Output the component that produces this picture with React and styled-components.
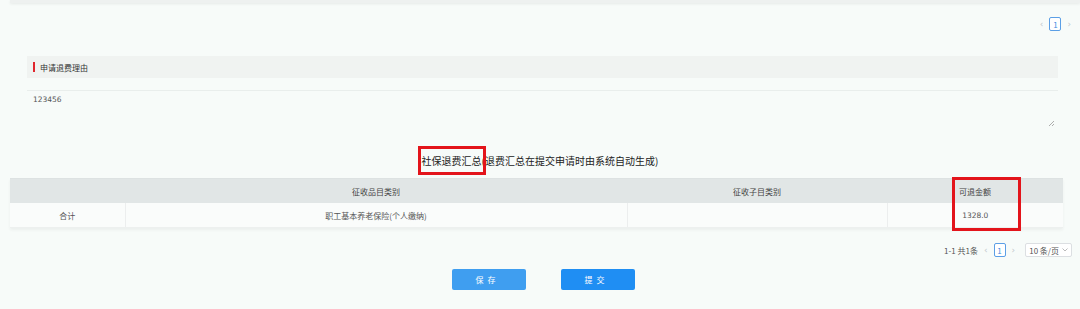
import styled, { createGlobalStyle } from "styled-components";

const Global = createGlobalStyle`
  html, body { margin: 0; padding: 0; background: #f7fbf9; }
  body { font-family: "Noto Sans CJK SC", "Noto Sans", sans-serif; color: #333; }
`;

const Page = styled.div`
  width: 1080px;
  height: 309px;
  overflow: hidden;
  background: #f7fbf9;
`;

const TopEdge = styled.div`
  margin-left: 10px;
  height: 3px;
  background: #eef1f0;
  box-shadow: 0 1px 3px rgba(0, 0, 0, 0.07);
`;

const Pager = styled.div`
  display: flex;
  align-items: center;
  justify-content: flex-end;
  gap: ${(p) => p.gap || 6}px;
  padding-right: ${(p) => p.right}px;
  margin-top: ${(p) => p.top}px;
  height: 14px;
  font-size: 8px;
  color: #555;
`;

const Arrow = styled.span`
  color: #c3c8cc;
  font-size: 9px;
  font-family: "DejaVu Sans", sans-serif;
  line-height: 14px;
`;

const PageBox = styled.span`
  box-sizing: border-box;
  width: 12px;
  height: 14px;
  border: 1px solid #5b9fe6;
  border-radius: 2px;
  color: #3f8ee0;
  font-size: 8px;
  display: flex;
  align-items: center;
  justify-content: center;
  background: #fff;
`;

const SizeSelect = styled.span`
  box-sizing: border-box;
  height: 14px;
  padding: 0 3px;
  border: 1px solid #dcdfe2;
  border-radius: 2px;
  background: #fff;
  display: flex;
  align-items: center;
  gap: 3px;
  font-size: 8px;
  color: #555;
  margin-left: 4px;
`;

const Section = styled.div`
  margin: 25px 22px 0 27px;
`;

const SectionHead = styled.div`
  height: 22px;
  background: #f0f3f1;
  display: flex;
  align-items: center;
  padding-left: 6px;
  gap: 5px;
  font-size: 8px;
  color: #333;
`;

const RedMark = styled.span`
  width: 2px;
  height: 10px;
  background: #e0262d;
`;

const TextArea = styled.div`
  position: relative;
  margin-top: 12px;
  height: 28px;
  border-top: 1px solid #e9eeec;
  padding: 4px 6px;
  font-size: 7.5px;
  color: #555;
  font-family: "DejaVu Sans", sans-serif;
`;

const Grip = styled.svg`
  position: absolute;
  right: 3px;
  bottom: 0;
`;

const Title = styled.div`
  margin-top: 27px;
  text-align: center;
  font-size: 10px;
  color: #222;
  line-height: 14px;
`;

const Marked = styled.span`
  position: relative;
  &::after {
    content: "";
    position: absolute;
    left: -4px;
    right: -4px;
    top: -7px;
    bottom: -7px;
    border: 3px solid #e3141b;
  }
`;

const TableWrap = styled.div`
  position: relative;
  margin: 10px 17px 0 10px;
  box-shadow: 0 2px 3px rgba(0, 0, 0, 0.05);
`;

const Table = styled.table`
  width: 100%;
  border-collapse: collapse;
  table-layout: fixed;
  font-size: 8px;
`;

const Th = styled.th`
  height: 24px;
  padding: 0;
  background: #e1e6e6;
  font-weight: normal;
  color: #444;
  border-top: 1px solid #dde2e2;
`;

const Td = styled.td`
  height: 24px;
  padding: 0;
  text-align: center;
  color: #555;
  background: #fafcfb;
  border-left: ${(p) => (p.first ? "none" : "1px solid #eceeee")};
  border-bottom: 1px solid #edf0ef;
  font-size: ${(p) => (p.num ? "7.5px" : "8px")};
  font-family: ${(p) =>
    p.num ? '"DejaVu Sans", sans-serif' : '"Noto Sans CJK SC", sans-serif'};
`;

const ColBox = styled.div`
  position: absolute;
  left: 942px;
  width: 69px;
  top: -1px;
  bottom: -3px;
  box-sizing: border-box;
  border: 3px solid #e3141b;
`;

const Buttons = styled.div`
  display: flex;
  justify-content: center;
  gap: 35px;
  margin-top: 12px;
  padding-left: 6px;
`;

const Button = styled.button`
  width: 74px;
  height: 21px;
  border: none;
  border-radius: 2px;
  background: ${(p) => (p.primary ? "#1f8ef3" : "#3f9ef0")};
  color: #fff;
  font-size: 8px;
  letter-spacing: 4px;
  padding-left: 4px;
  font-family: "Noto Sans CJK SC", sans-serif;
`;

const cols = [115, 502, 260, 176];
const headers = ["", "征收品目类别", "征收子目类别", "可退金额"];
const row = ["合计", "职工基本养老保险(个人缴纳)", "", "1328.0"];

export default function App() {
  return (
    <Page>
      <Global />
      <TopEdge />
      <Pager top={14} right={9}>
        <Arrow>‹</Arrow>
        <PageBox>1</PageBox>
        <Arrow>›</Arrow>
      </Pager>
      <Section>
        <SectionHead>
          <RedMark />
          申请退费理由
        </SectionHead>
        <TextArea>
          123456
          <Grip width="7" height="7" viewBox="0 0 7 7">
            <path d="M6 1 L1 6 M6 4 L4 6" stroke="#999" strokeWidth="0.8" />
          </Grip>
        </TextArea>
      </Section>
      <Title>
        <Marked>社保退费汇总</Marked>(退费汇总在提交申请时由系统自动生成)
      </Title>
      <TableWrap>
        <Table>
          <colgroup>
            {cols.map((w, i) => (
              <col key={i} style={{ width: w }} />
            ))}
          </colgroup>
          <thead>
            <tr>
              {headers.map((h, i) => (
                <Th key={i}>{h}</Th>
              ))}
            </tr>
          </thead>
          <tbody>
            <tr>
              {row.map((c, i) => (
                <Td key={i} first={i === 0} num={i === 3}>
                  {c}
                </Td>
              ))}
            </tr>
          </tbody>
        </Table>
        <ColBox />
      </TableWrap>
      <Pager top={15} right={8} gap={6}>
        <span>1-1 共1条</span>
        <Arrow>‹</Arrow>
        <PageBox>1</PageBox>
        <Arrow>›</Arrow>
        <SizeSelect>
          10 条/页
          <svg width="6" height="4" viewBox="0 0 6 4">
            <path d="M0.5 0.5 L3 3 L5.5 0.5" fill="none" stroke="#aaa" strokeWidth="0.8" />
          </svg>
        </SizeSelect>
      </Pager>
      <Buttons>
        <Button>保存</Button>
        <Button primary>提交</Button>
      </Buttons>
    </Page>
  );
}
